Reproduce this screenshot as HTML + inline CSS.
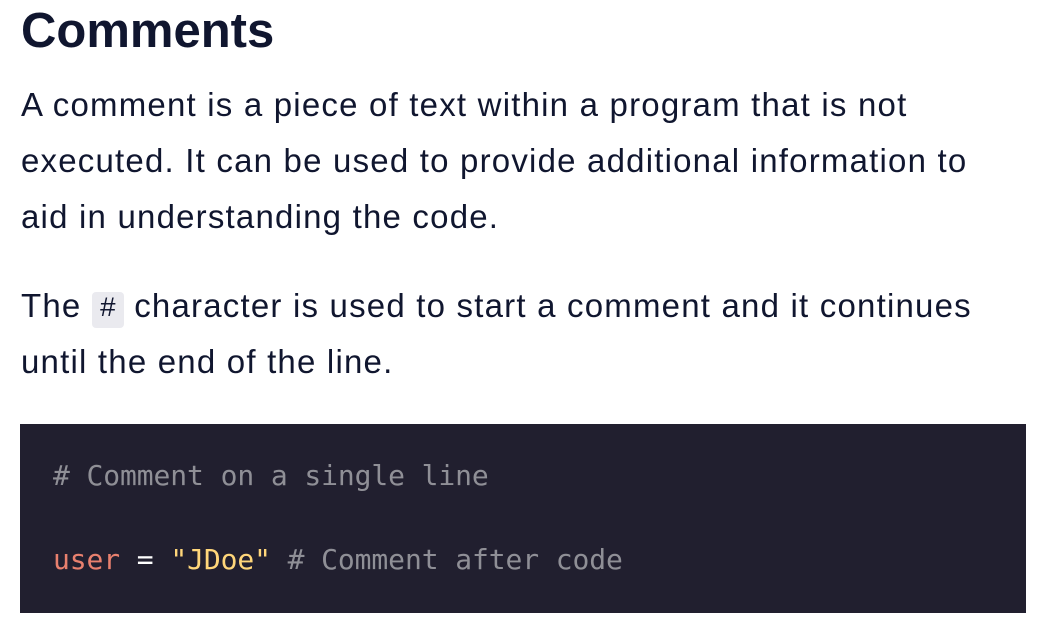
<!DOCTYPE html>
<html><head><meta charset="utf-8"><style>
html,body{margin:0;padding:0;background:#fff;width:1048px;height:630px;overflow:hidden}
body{font-family:"Liberation Sans",sans-serif;color:#10162f}
h1{position:absolute;left:21px;top:1px;margin:0;font-size:49px;font-weight:bold;line-height:60px}
p{position:absolute;left:21px;margin:0;font-size:33px;line-height:56px;width:1020px;letter-spacing:1.2px}
.c{display:inline-block;background:#eaeaef;border-radius:4px;font-family:"Liberation Mono",monospace;font-size:28px;width:32px;height:36px;line-height:36px;text-align:center;letter-spacing:0;vertical-align:1px}
.code{position:absolute;left:20px;top:424px;width:1006px;height:189px;background:#211f2f;font-family:"DejaVu Sans Mono","Liberation Mono",monospace;font-size:28px;letter-spacing:-0.1px}
.l{position:absolute;left:33px;white-space:pre;line-height:40px}
.cm{color:#8f8f96}.v{color:#e8806e}.s{color:#ffd67a}.o{color:#fff}
</style></head><body>
<h1>Comments</h1>
<p style="top:77px">A comment is a piece of text within a program that is not<br>executed. It can be used to provide additional information to<br>aid in understanding the code.</p>
<p style="top:278px">The <span class="c">#</span> character is used to start a comment and it continues<br>until the end of the line.</p>
<div class="code">
<div class="l cm" style="top:32px"># Comment on a single line</div>
<div class="l" style="top:116px"><span class="v">user</span> <span class="o">=</span> <span class="s">"JDoe"</span> <span class="cm"># Comment after code</span></div>
</div>
</body></html>
